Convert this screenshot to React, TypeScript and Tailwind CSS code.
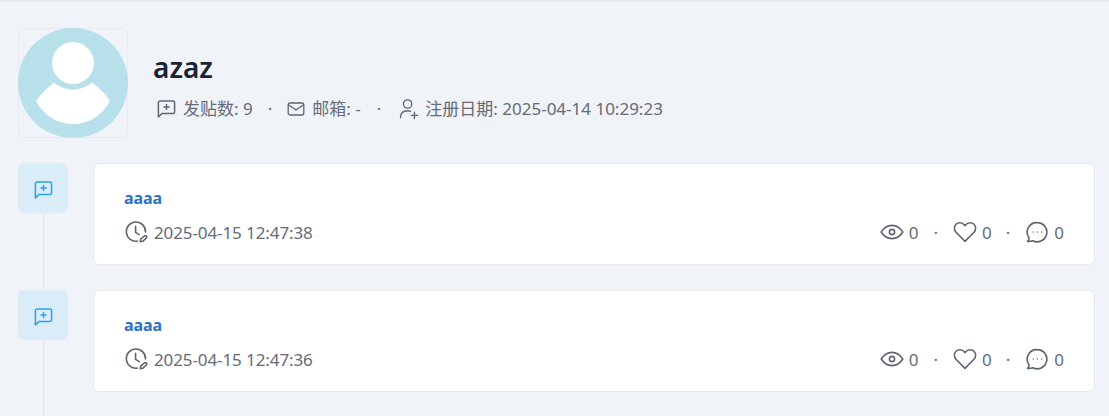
import React from 'react';

const font = { fontFamily: '"Noto Sans", "Noto Sans CJK SC", sans-serif' };

const BubblePlus = ({ className }: { className: string }) => (
  <svg viewBox="0 0 20 20" fill="none" stroke="currentColor" strokeWidth="1.5" strokeLinejoin="round" strokeLinecap="round" className={className}>
    <path d="M4 2h13a1.6 1.6 0 0 1 1.6 1.6v9.2a1.6 1.6 0 0 1-1.6 1.6H6.2L2.4 18V3.6A1.6 1.6 0 0 1 4 2z" />
    <path d="M10.5 5.6v5M8 8.1h5" />
  </svg>
);

const ClockEdit = () => (
  <svg viewBox="0 0 24 24" fill="none" stroke="currentColor" strokeWidth="1.6" strokeLinecap="round" strokeLinejoin="round" className="w-[24px] h-[24px] mb-[2px] text-[#5f6570]">
    <path d="M13.2 21.1A9.6 9.6 0 1 1 21.5 12" />
    <path d="M11.6 6.4v6l3.6 2.2" />
    <path d="M16.2 21.6l.5-2.4 3.6-3.2a1.4 1.4 0 0 1 2 2l-3.6 3.3-2.5.3z" />
  </svg>
);

const Eye = () => (
  <svg viewBox="0 0 24 24" fill="none" stroke="currentColor" strokeWidth="1.6" strokeLinejoin="round" className="w-[24px] h-[24px] mb-[2px] text-[#5f6570]">
    <path d="M1.2 12C4 7.6 7.6 5.4 12 5.4s8 2.2 10.8 6.6C20 16.4 16.4 18.6 12 18.6S4 16.4 1.2 12z" />
    <circle cx="12" cy="12" r="2.6" />
  </svg>
);

const Heart = () => (
  <svg viewBox="0 0 24 24" fill="none" stroke="currentColor" strokeWidth="1.6" strokeLinejoin="round" className="w-[24px] h-[24px] mb-[2px] text-[#5f6570]">
    <path d="M12 21.4L3 12.2a5.7 5.7 0 0 1 0-7.9 5.4 5.4 0 0 1 7.7 0L12 5.6l1.3-1.3a5.4 5.4 0 0 1 7.7 0 5.7 5.7 0 0 1 0 7.9L12 21.4z" />
  </svg>
);

const BubbleDots = () => (
  <svg viewBox="0 0 24 24" fill="none" stroke="currentColor" strokeWidth="1.6" strokeLinejoin="round" className="w-[24px] h-[24px] mb-[2px] text-[#5f6570]">
    <path d="M12.4 2.6a9.6 9.6 0 1 1-4.6 18.1c-1.6.6-3.2.8-5.2.7 1-1.1 1.5-2.2 1.5-3.5a9.6 9.6 0 0 1 8.3-15.3z" />
    <circle cx="8.2" cy="12" r=".7" fill="currentColor" stroke="none" />
    <circle cx="12.4" cy="12" r=".7" fill="currentColor" stroke="none" />
    <circle cx="16.6" cy="12" r=".7" fill="currentColor" stroke="none" />
  </svg>
);

const Mail = () => (
  <svg viewBox="0 0 18 18" fill="none" stroke="currentColor" strokeWidth="1.3" strokeLinejoin="round" strokeLinecap="round" className="w-[18px] h-[18px] text-[#5f6570]">
    <rect x="1.2" y="3" width="15.6" height="12" rx="2" />
    <path d="M1.8 5l7.2 5 7.2-5" />
  </svg>
);

const UserPlus = () => (
  <svg viewBox="0 0 22 24" fill="none" stroke="currentColor" strokeWidth="1.5" strokeLinecap="round" className="w-[20px] h-[22px] text-[#5f6570]">
    <circle cx="9.5" cy="6.5" r="4.6" />
    <path d="M1.6 21.5c0-4.6 3-7.6 7.9-7.6 1.2 0 2.3.2 3.3.6" />
    <path d="M17 15.5v7M13.5 19h7" />
  </svg>
);

const Avatar = () => (
  <div className="relative w-[110px] h-[110px] rounded-md border border-[#e8ebf0]">
    <svg viewBox="0 0 110 110" className="absolute -inset-px w-[110px] h-[110px]">
      <circle cx="55" cy="55" r="55" fill="#b8e0ea" />
      <circle cx="55" cy="35" r="21" fill="#ffffff" />
      <path d="M18 73 C 24 65, 29 60, 36 54.5 C 47 64, 63 64, 74 54.5 C 81 60, 87 65, 92 73 C 84 88, 70 96, 55 96 C 40 96, 26 88, 18 73 z" fill="#ffffff" />
    </svg>
  </div>
);

const Dot = ({ className }: { className: string }) => <span className={className}>·</span>;

const Post = ({ time, last }: { time: string; last?: boolean }) => (
  <div className="flex gap-[25px]">
    <div className="w-[50px] flex flex-col items-center shrink-0">
      <div className="w-[50px] h-[50px] rounded-md bg-[#dbecf9] flex items-center justify-center">
        <BubblePlus className="w-[20px] h-[20px] mt-[3px] text-[#27a3ee]" />
      </div>
      <div className="flex-1 w-px bg-[#e2e6ec]" />
    </div>
    <div className={`flex-1 ${last ? '' : 'pb-[25px]'}`}>
      <div className="h-[102px] bg-white rounded-md border border-[#e6e8ec] px-[30px] pt-[23px]">
        <div className="text-[16px] leading-[22px] font-bold tracking-[-0.1px] text-[#2a72c4]">aaaa</div>
        <div className="mt-[11px] flex items-center justify-between text-[#666b75] text-[17px] leading-[24px]">
          <div className="flex items-center gap-[6px]">
            <ClockEdit />
            <span className="tracking-[-0.1px]">{time}</span>
          </div>
          <div className="flex items-center">
            <Eye />
            <span className="ml-[5px]">0</span>
            <Dot className="mx-[15px]" />
            <Heart />
            <span className="ml-[5px]">0</span>
            <Dot className="ml-[14px] mr-[15px]" />
            <BubbleDots />
            <span className="ml-[5px]">0</span>
          </div>
        </div>
      </div>
    </div>
  </div>
);

export default function App() {
  return (
    <div style={font} className="w-[1109px] h-[416px] overflow-hidden bg-[#f0f3f8] border-t-2 border-[#e6e8ec] pl-[18px] pr-[14px] pt-[26px]">
      <div className="flex items-center gap-[25px] h-[110px]">
        <Avatar />
        <div className="pt-[3px]">
          <div className="text-[28px] leading-[36px] font-semibold text-[#1a2236]">azaz</div>
          <div className="mt-[12px] flex items-center text-[17px] leading-[24px] text-[#666b75]">
            <BubblePlus className="w-[20px] h-[20px] ml-[3px] text-[#5f6570]" />
            <span className="ml-[7px]">发贴数: 9</span>
            <Dot className="mx-[15px]" />
            <Mail />
            <span className="ml-[7px]">邮箱: -</span>
            <Dot className="ml-[16px] mr-[18px]" />
            <UserPlus />
            <span className="ml-[6px]">注册日期: 2025-04-14 10:29:23</span>
          </div>
        </div>
      </div>
      <div className="mt-[25px]">
        <Post time="2025-04-15 12:47:38" />
        <Post time="2025-04-15 12:47:36" />
      </div>
    </div>
  );
}
